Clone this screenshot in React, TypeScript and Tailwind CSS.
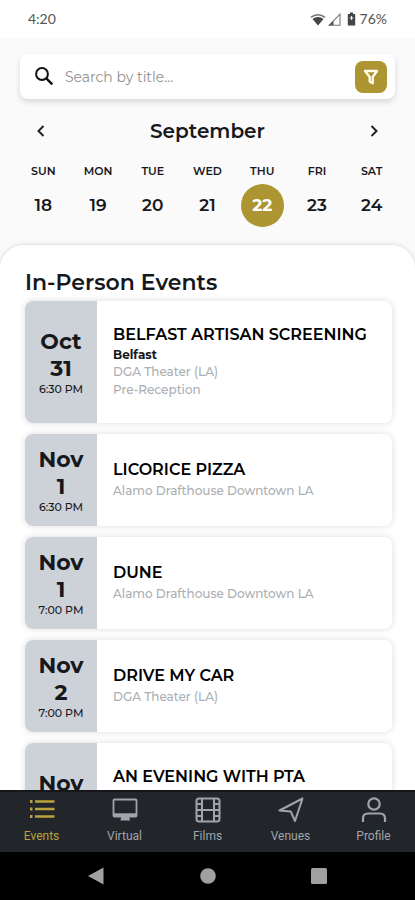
import type { ReactNode } from "react";

type EventItem = {
  month: string;
  day: string;
  time: string;
  title: string;
  subtitle?: string;
  details: string[];
};

const days = [
  { name: "SUN", date: 18 },
  { name: "MON", date: 19 },
  { name: "TUE", date: 20 },
  { name: "WED", date: 21 },
  { name: "THU", date: 22 },
  { name: "FRI", date: 23 },
  { name: "SAT", date: 24 },
];

const events: EventItem[] = [
  {
    month: "Oct",
    day: "31",
    time: "6:30 PM",
    title: "BELFAST ARTISAN SCREENING",
    subtitle: "Belfast",
    details: ["DGA Theater (LA)", "Pre-Reception"],
  },
  { month: "Nov", day: "1", time: "6:30 PM", title: "LICORICE PIZZA", details: ["Alamo Drafthouse Downtown LA"] },
  { month: "Nov", day: "1", time: "7:00 PM", title: "DUNE", details: ["Alamo Drafthouse Downtown LA"] },
  { month: "Nov", day: "2", time: "7:00 PM", title: "DRIVE MY CAR", details: ["DGA Theater (LA)"] },
  {
    month: "Nov",
    day: "3",
    time: "7:00 PM",
    title: "AN EVENING WITH PTA",
    subtitle: "Licorice Pizza",
    details: ["DGA Theater (LA)", "Reception"],
  },
];

function StatusBar() {
  return (
    <div className="flex h-[38px] shrink-0 items-center justify-between bg-white px-7 font-['Lato',sans-serif] text-sm text-[#555]">
      <span>4:20</span>
      <div className="flex items-center">
        <svg width="16" height="13" viewBox="0 0 16 13" aria-hidden="true">
          <path d="M1 4.4C5 .7 11 .7 15 4.4" fill="none" stroke="#777" strokeWidth="1.5" />
          <path d="M2.500 6C5.500 3.200 10.500 3.200 13.500 6L8 12.500Z" fill="#444" />
        </svg>
        <svg className="ml-0.5" width="13" height="13" viewBox="0 0 13 13" aria-hidden="true">
          <path d="M1 12.3 12 1.2V12.3Z" fill="none" stroke="#777" strokeWidth="1.1" />
          <path d="M1 12.3 5.5 7.8V12.3Z" fill="#555" />
        </svg>
        <svg className="ml-1.5" width="9" height="14" viewBox="0 0 9 14" aria-hidden="true">
          <path d="M3 .5h3v1.4h2.2v11.6H.8V1.900H3Z" fill="#444" />
          <path d="M4.500 4v4M2.700 6h3.600" stroke="#eee" strokeWidth="1.200" />
        </svg>
        <span className="ml-1">76%</span>
      </div>
    </div>
  );
}

function SearchBar() {
  return (
    <div className="mx-5 mt-4 flex h-[45px] items-center rounded-lg bg-white pl-3 pr-2 shadow-[0_3px_6px_rgba(0,0,0,0.14)]">
      <svg width="24" height="24" viewBox="0 0 24 24" fill="none" stroke="#111" strokeWidth="2" aria-hidden="true">
        <circle cx="10" cy="9" r="5.900" />
        <path d="m14.300 13.300 6 6" strokeWidth="2.400" />
      </svg>
      <input
        type="text"
        aria-label="Search by title"
        placeholder="Search by title..."
        className="ml-[9px] min-w-0 flex-1 bg-transparent text-sm text-black outline-none placeholder:text-[#929292]"
      />
      <button type="button" aria-label="Filter" className="flex size-8 items-center justify-center rounded-lg bg-[#ad9532]">
        <svg width="18" height="18" viewBox="0 0 18 18" fill="none" stroke="#fffbea" strokeWidth="2.400" strokeLinejoin="round" aria-hidden="true">
          <path d="M3 3H15L10.700 9V15.300L7.700 13.500V9Z" />
        </svg>
      </button>
    </div>
  );
}

function Chevron({ d }: { d: string }) {
  return (
    <svg width="24" height="24" viewBox="0 0 24 24" fill="none" stroke="#222" strokeWidth="2" aria-hidden="true">
      <path d={d} />
    </svg>
  );
}

function WeekPicker() {
  return (
    <section>
      <div className="mt-5 flex h-6 items-center justify-between px-7">
        <button type="button" aria-label="Previous month">
          <Chevron d="M15.500 7 10.500 12 15.500 17" />
        </button>
        <h1 className="text-xl leading-6 font-semibold">September</h1>
        <button type="button" aria-label="Next month">
          <Chevron d="M8.500 7 13.500 12 8.500 17" />
        </button>
      </div>
      <div className="mt-5 grid grid-cols-7 px-4">
        {days.map((d) => (
          <button key={d.name} type="button" className="flex flex-col items-center">
            <span className="text-[11px] leading-4 font-semibold">{d.name}</span>
            <span
              className={
                d.date === 22
                  ? "mt-[5px] flex size-[43px] items-center justify-center rounded-full bg-[#ad9532] text-[17px] font-bold text-white"
                  : "mt-[5px] flex size-[43px] items-center justify-center text-[17px] font-semibold"
              }
            >
              {d.date}
            </span>
          </button>
        ))}
      </div>
    </section>
  );
}

function EventCard({ event }: { event: EventItem }) {
  return (
    <li
      className={
        event.subtitle
          ? "flex min-h-[122px] overflow-hidden rounded-lg bg-white shadow-[0_0_7px_rgba(0,0,0,0.14)]"
          : "flex min-h-[92px] overflow-hidden rounded-lg bg-white shadow-[0_0_7px_rgba(0,0,0,0.14)]"
      }
    >
      <div className="flex w-[72px] shrink-0 flex-col items-center justify-center bg-[#cdd2d9] text-[#16181b]">
        <span className="text-[22px] leading-[27px] font-bold">{event.month}</span>
        <span className="text-[22px] leading-[27px] font-bold">{event.day}</span>
        <span className="text-[11px] leading-[14px] font-medium">{event.time}</span>
      </div>
      <div className="flex min-w-0 flex-1 flex-col justify-center pl-4">
        <h3 className="mb-0.5 text-base leading-5 font-semibold whitespace-nowrap text-black">{event.title}</h3>
        {event.subtitle && <p className="text-xs leading-4 font-bold">{event.subtitle}</p>}
        <div className="text-xs leading-[18px] font-medium text-[#abaeb2]">
          {event.details.map((line) => (
            <p key={line}>{line}</p>
          ))}
        </div>
      </div>
    </li>
  );
}

function TabIcon({ children }: { children: ReactNode }) {
  return (
    <svg width="28" height="28" viewBox="0 0 28 28" fill="none" stroke="currentColor" strokeWidth="2" aria-hidden="true">
      {children}
    </svg>
  );
}

const tabs = [
  {
    label: "Events",
    icon: (
      <>
        <path d="M7 5.500h19.500M7 13h19.500M7 20.500h19.500" strokeWidth="2.600" />
        <path d="M2 5.500h2.500M2 13h2.500M2 20.500h2.500" strokeWidth="3" />
      </>
    ),
  },
  {
    label: "Virtual",
    icon: (
      <>
        <rect x="2.500" y="3.500" width="23" height="17" rx="1" strokeWidth="1.800" />
        <path d="M3 19h22" strokeWidth="3.400" />
        <path d="M10.500 20h7.500l1 4.500h-9.500Z" fill="currentColor" stroke="none" />
      </>
    ),
  },
  {
    label: "Films",
    icon: (
      <>
        <rect x="2.500" y="2.500" width="23" height="23" rx="2.500" />
        <path d="M8 3v22M20 3v22M8 14h12" />
        <path d="M3 8h5M3 14h5M3 20h5M20 8h5M20 14h5M20 20h5" />
      </>
    ),
  },
  {
    label: "Venues",
    icon: <path d="M25.500 2.500 18 25 13.800 15.500 2.500 14.500Z" strokeLinejoin="round" />,
  },
  {
    label: "Profile",
    icon: (
      <>
        <circle cx="14" cy="8" r="5.700" strokeWidth="2.200" />
        <path d="M3 26V22.500c0-3 2-5 5-5h12c3 0 5 2 5 5v3.500" strokeWidth="2.200" />
      </>
    ),
  },
];

function TabBar() {
  return (
    <nav className="grid h-[62px] shrink-0 grid-cols-5 border-t-2 border-[#15171a] bg-[#22252a]">
      {tabs.map((tab) => (
        <a
          key={tab.label}
          href={"#" + tab.label.toLowerCase()}
          aria-current={tab.label === "Events" ? "page" : undefined}
          className={
            tab.label === "Events"
              ? "flex flex-col items-center pt-1 text-[#bba43c]"
              : "flex flex-col items-center pt-1 text-[#a1a4a8]"
          }
        >
          <TabIcon>{tab.icon}</TabIcon>
          <span className="mt-1 font-['Roboto',sans-serif] text-xs leading-4">{tab.label}</span>
        </a>
      ))}
    </nav>
  );
}

function SystemBar() {
  return (
    <div className="flex h-12 shrink-0 items-center justify-between bg-black px-[84px] text-[#a0a0a0]">
      <button type="button" aria-label="Back">
        <svg width="24" height="24" viewBox="0 0 24 24" fill="currentColor" aria-hidden="true">
          <path d="M4 12 19.500 3.500V20.500Z" />
        </svg>
      </button>
      <button type="button" aria-label="Home">
        <svg width="24" height="24" viewBox="0 0 24 24" fill="currentColor" aria-hidden="true">
          <circle cx="12" cy="12" r="7.800" />
        </svg>
      </button>
      <button type="button" aria-label="Overview">
        <svg width="24" height="24" viewBox="0 0 24 24" fill="currentColor" aria-hidden="true">
          <rect x="4" y="4" width="16" height="16" rx="1.500" />
        </svg>
      </button>
    </div>
  );
}

export default function App() {
  return (
    <div className="flex h-screen flex-col overflow-hidden bg-[#fafafa] font-['Montserrat','Inter',sans-serif] text-[#16181b]">
      <StatusBar />
      <SearchBar />
      <WeekPicker />
      <main className="mt-[18px] min-h-0 flex-1 overflow-x-hidden overflow-y-auto rounded-t-3xl bg-white pt-6 pr-[23px] pl-[25px] shadow-[0_0_5px_rgba(0,0,0,0.16)] [scrollbar-width:none]">
        <h2 className="text-[22px] leading-7 font-semibold">In-Person Events</h2>
        <ul className="mt-1 flex flex-col gap-[11px]">
          {events.map((event) => (
            <EventCard key={event.title} event={event} />
          ))}
        </ul>
      </main>
      <TabBar />
      <SystemBar />
    </div>
  );
}
